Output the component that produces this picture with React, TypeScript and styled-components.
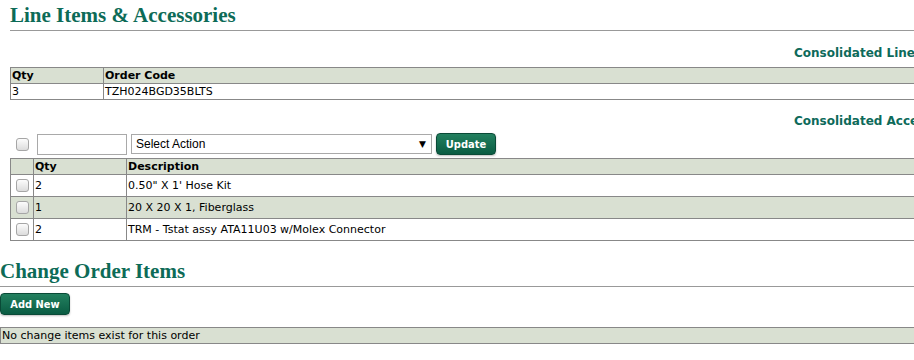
import React from 'react'
import styled, { createGlobalStyle } from 'styled-components'

const GlobalStyle = createGlobalStyle`
    html, body {
        margin: 0;
        padding: 0;
        background: #fff;
        overflow: hidden;
    }
    body {
        font-family: "DejaVu Sans", Verdana, sans-serif;
        font-size: 11px;
        color: #000;
    }
`

const Page = styled.div`
    width: 1020px;
`

const Section = styled.section<{ $indent?: number }>`
    padding-left: ${p => p.$indent || 0}px;
`

const Title = styled.h2`
    margin: 0;
    padding-top: 3px;
    padding-bottom: 3px;
    font-family: "Liberation Serif", "DejaVu Serif", serif;
    font-weight: bold;
    font-size: 21px;
    line-height: 24px;
    color: #0d6b57;
    border-bottom: 1px solid #999;
`

const SubRow = styled.div<{ $top: number; $bottom: number }>`
    display: grid;
    grid-template-columns: 1fr 226px;
    padding-top: ${p => p.$top}px;
    height: 16px;
    margin-bottom: ${p => p.$bottom}px;
`

const SubTitle = styled.div`
    grid-column: 2;
    font-weight: bold;
    font-size: 12px;
    line-height: 16px;
    color: #0d6a5a;
    white-space: nowrap;
`

const Grid = styled.table`
    width: 100%;
    border-collapse: collapse;
    border-left: 1px solid #888;

    th, td {
        border-top: 1px solid #888;
        border-bottom: 1px solid #888;
        border-right: 1px solid #888;
        padding: 0 1px;
        text-align: left;
        vertical-align: middle;
        white-space: nowrap;
    }
    th {
        font-weight: bold;
        height: 15px;
        line-height: 15px;
        background: #d9e0d2;
    }
`

const Row = styled.tr<{ $alt?: boolean; $tall?: boolean }>`
    background: ${p => (p.$alt ? '#d9e0d2' : '#fff')};
    td {
        height: ${p => (p.$tall ? 21 : 15)}px;
        line-height: 15px;
    }
`

const Box = styled.input.attrs({ type: 'checkbox' })`
    appearance: none;
    display: block;
    margin: 0 auto;
    width: 13px;
    height: 13px;
    border: 1px solid #a6a6a6;
    border-radius: 3px;
    background: linear-gradient(#fcfcfc, #dcdcdc);
    box-sizing: border-box;
`

const Toolbar = styled.div`
    display: flex;
    align-items: center;
    gap: 4px;
    height: 22px;
    margin-bottom: 3px;
`

const BoxCell = styled.div`
    box-sizing: border-box;
    width: 23px;
    padding-left: 1px;
`

const TextField = styled.input`
    box-sizing: border-box;
    width: 90px;
    height: 21px;
    border: 1px solid #a9a9a9;
    padding: 0 3px;
    font-size: 12px;
`

const SelectWrap = styled.div`
    position: relative;
    width: 301px;
    height: 20px;
`

const Select = styled.select`
    appearance: none;
    box-sizing: border-box;
    width: 100%;
    height: 20px;
    border: 1px solid #a9a9a9;
    background: #fff;
    padding: 0 4px;
    font-family: "Liberation Sans", Arial, sans-serif;
    font-size: 12px;
    color: #000;
`

const Arrow = styled.span`
    position: absolute;
    right: 6px;
    top: 4px;
    font-size: 9px;
    line-height: 12px;
    pointer-events: none;
`

const Button = styled.button<{ $w: number }>`
    box-sizing: border-box;
    width: ${p => p.$w}px;
    height: 22px;
    padding: 0;
    border: 1px solid #0a4a37;
    border-radius: 4px;
    background: linear-gradient(#23805f, #0a5c43);
    color: #fff;
    font-family: "DejaVu Sans Condensed", "DejaVu Sans", sans-serif;
    font-weight: bold;
    font-size: 11px;
    box-shadow: 0 1px 2px rgba(0, 0, 0, 0.25);
`

const Spacer = styled.div<{ $h: number }>`
    height: ${p => p.$h}px;
`

const items = [
    { qty: '2', desc: '0.50" X 1\' Hose Kit' },
    { qty: '1', desc: '20 X 20 X 1, Fiberglass' },
    { qty: '2', desc: 'TRM - Tstat assy ATA11U03 w/Molex Connector' },
]

export default function App() {
    return (
        <Page>
            <GlobalStyle />
            <Section $indent={10}>
                <Title>Line Items &amp; Accessories</Title>
                <SubRow $top={14} $bottom={6}>
                    <SubTitle>Consolidated Line Items</SubTitle>
                </SubRow>
                <Grid>
                    <thead>
                        <tr>
                            <th style={{ width: 90 }}>Qty</th>
                            <th>Order Code</th>
                        </tr>
                    </thead>
                    <tbody>
                        <Row>
                            <td>3</td>
                            <td>TZH024BGD35BLTS</td>
                        </Row>
                    </tbody>
                </Grid>
                <SubRow $top={13} $bottom={4}>
                    <SubTitle>Consolidated Accessories</SubTitle>
                </SubRow>
                <Toolbar>
                    <BoxCell>
                        <Box />
                    </BoxCell>
                    <TextField />
                    <SelectWrap>
                        <Select defaultValue="">
                            <option value="">Select Action</option>
                        </Select>
                        <Arrow>▼</Arrow>
                    </SelectWrap>
                    <Button $w={60}>Update</Button>
                </Toolbar>
                <Grid>
                    <thead>
                        <tr>
                            <th style={{ width: 20 }}></th>
                            <th style={{ width: 90 }}>Qty</th>
                            <th>Description</th>
                        </tr>
                    </thead>
                    <tbody>
                        {items.map((it, i) => (
                            <Row key={i} $tall $alt={i % 2 === 1}>
                                <td><Box /></td>
                                <td>{it.qty}</td>
                                <td>{it.desc}</td>
                            </Row>
                        ))}
                    </tbody>
                </Grid>
            </Section>
            <Section>
                <Spacer $h={15} />
                <Title>Change Order Items</Title>
                <Spacer $h={6} />
                <Button $w={70}>Add New</Button>
                <Spacer $h={12} />
                <Grid>
                    <tbody>
                        <Row $alt>
                            <td>No change items exist for this order</td>
                        </Row>
                    </tbody>
                </Grid>
            </Section>
        </Page>
    )
}
